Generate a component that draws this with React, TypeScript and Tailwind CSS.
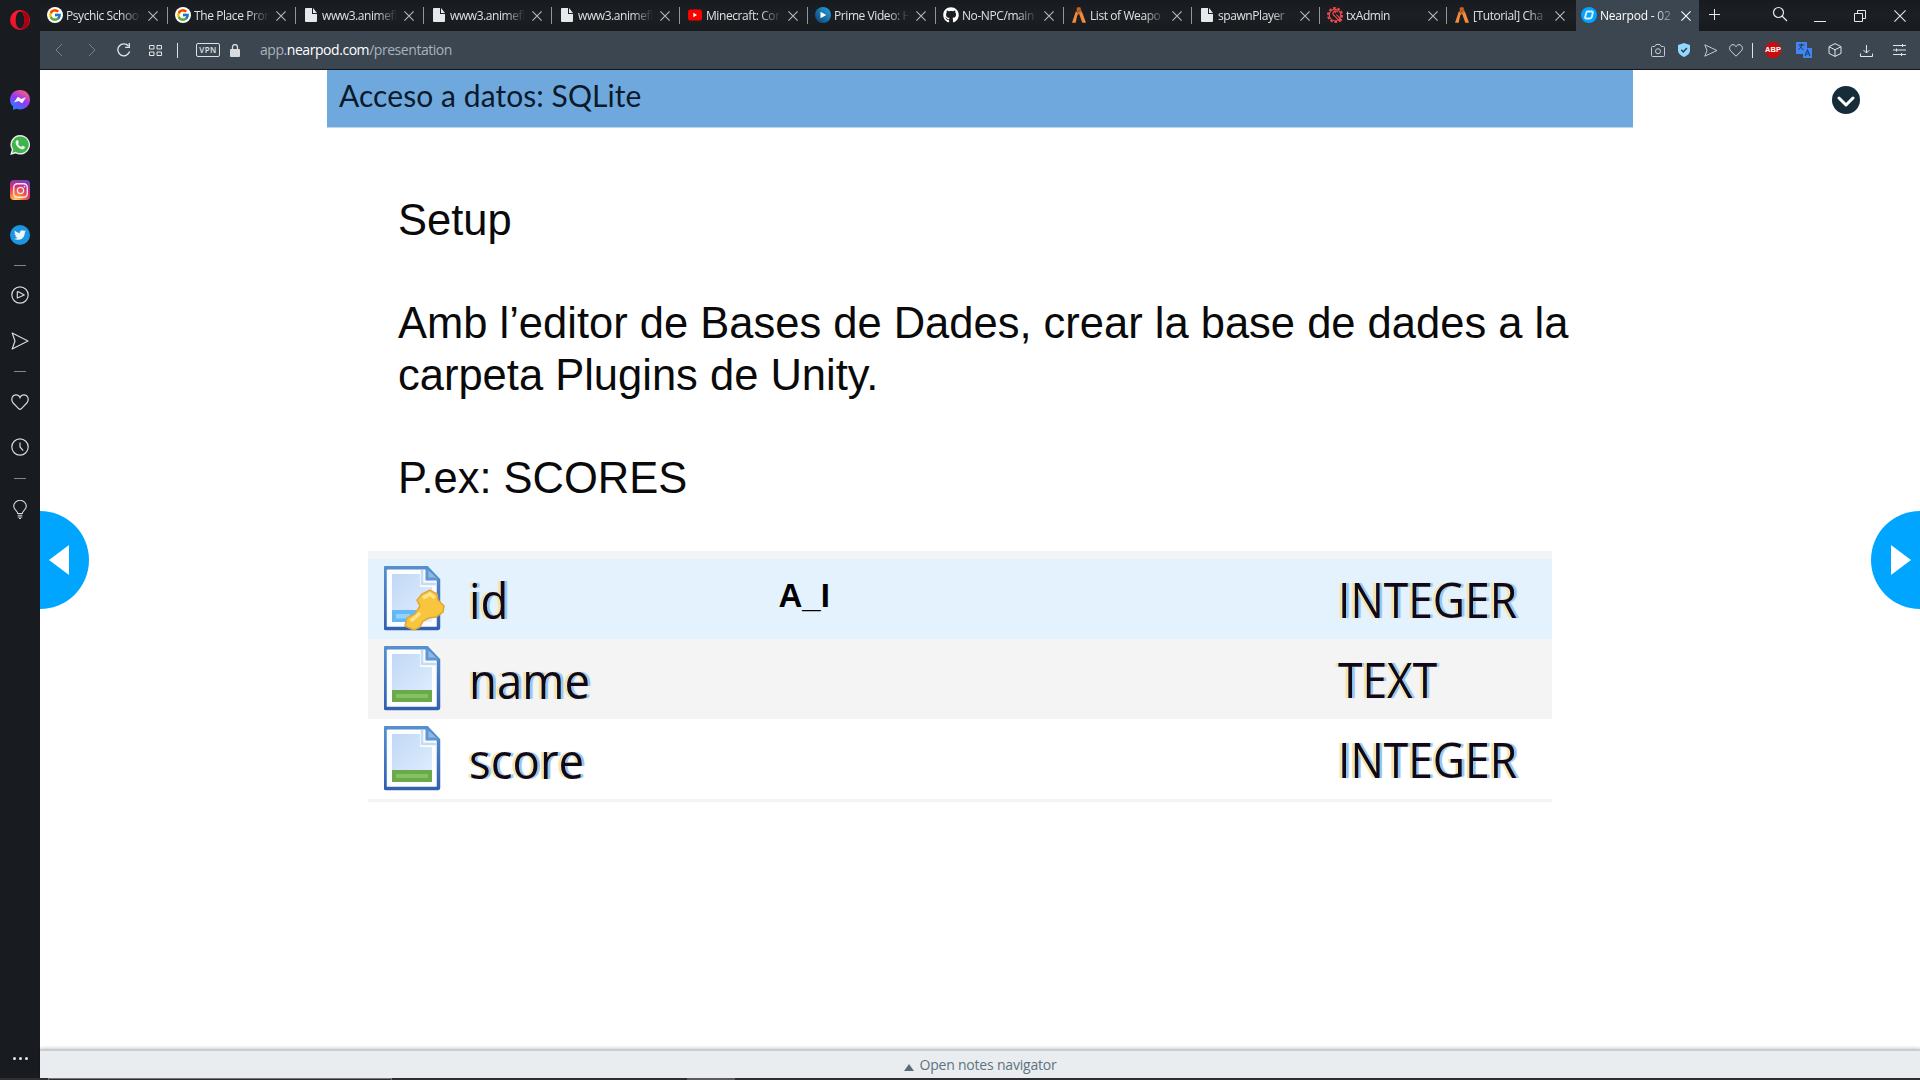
import React from "react";
import { FcGoogle } from "react-icons/fc";
import { FaGithub, FaTwitter, FaInstagram } from "react-icons/fa";

type Kind = "google" | "file" | "youtube" | "prime" | "github" | "fivem" | "tx" | "nearpod";

const TABS: { kind: Kind; title: string; width: string }[] = [
  { kind: "google", title: "Psychic Schoo", width: "w-[128px]" },
  { kind: "google", title: "The Place Pron", width: "w-[128px]" },
  { kind: "file", title: "www3.animefl", width: "w-[128px]" },
  { kind: "file", title: "www3.animefl", width: "w-[128px]" },
  { kind: "file", title: "www3.animefl", width: "w-[128px]" },
  { kind: "youtube", title: "Minecraft: Cor", width: "w-[128px]" },
  { kind: "prime", title: "Prime Video: H", width: "w-[128px]" },
  { kind: "github", title: "No-NPC/main", width: "w-[128px]" },
  { kind: "fivem", title: "List of Weapo", width: "w-[128px]" },
  { kind: "file", title: "spawnPlayer", width: "w-[128px]" },
  { kind: "tx", title: "txAdmin", width: "w-[127px]" },
  { kind: "fivem", title: "[Tutorial] Cha", width: "w-[129px]" },
];

function Favicon({ kind }: { kind: Kind }) {
  switch (kind) {
    case "google":
      return (
        <span className="flex size-4 items-center justify-center rounded-full bg-white">
          <FcGoogle size={14} />
        </span>
      );
    case "file":
      return (
        <svg width="16" height="16" viewBox="0 0 16 16">
          <path d="M3 1h6v6h5v7a1 1 0 0 1-1 1H3a1 1 0 0 1-1-1V2a1 1 0 0 1 1-1z" fill="#e6e9ec" />
          <path d="M10 1v5h4z" fill="#e6e9ec" />
        </svg>
      );
    case "youtube":
      return (
        <svg width="16" height="16" viewBox="0 0 16 16">
          <rect x="1" y="2.5" width="14" height="11" rx="2.5" fill="#f00" />
          <path d="M6.3 5.8v4.4L10 8z" fill="#fff" />
        </svg>
      );
    case "prime":
      return (
        <svg width="16" height="16" viewBox="0 0 16 16">
          <defs>
            <linearGradient id="prime" x1="0" y1="1" x2="1" y2="0">
              <stop offset="0" stopColor="#0b3f79" />
              <stop offset="1" stopColor="#27a5dc" />
            </linearGradient>
          </defs>
          <circle cx="8" cy="8" r="8" fill="url(#prime)" />
          <path d="M5.5 4.8v6.4L11.3 8z" fill="#fff" />
        </svg>
      );
    case "github":
      return <FaGithub size={16} color="#fff" />;
    case "fivem":
      return (
        <svg width="16" height="16" viewBox="0 0 16 16">
          <path d="M5.6 2 6.4.2h2.9L10 2 6.2 6z" fill="#c8641f" />
          <path d="M1 15.8 5 4l1.700 2-2 9.800z" fill="#f48a3a" />
          <path d="M6 6.800 10 2.600l.5 1.300-4.800 5z" fill="#e87c2e" />
          <path d="M8 6.500l2.800-2.200L15 15.800h-3.700z" fill="#f48a3a" />
        </svg>
      );
    case "tx":
      return (
        <svg width="16" height="16" viewBox="0 0 16 16" fill="none" stroke="#ee4a50">
          <circle cx="8" cy="8" r="7" strokeWidth="2" strokeDasharray="2.600 1.800" />
          <circle cx="8" cy="8" r="5.700" strokeWidth="1.100" />
          <path d="M10.800 5.200a2.600 2.600 0 1 0-3.200 3.700L13 14.500l1.700-1.600L9.400 7.600" strokeWidth="1.200" />
          <path d="M9.200 4.300 7.700 6" strokeWidth="1.200" />
        </svg>
      );
    default:
      return (
        <svg width="16" height="16" viewBox="0 0 16 16">
          <circle cx="8" cy="8" r="8" fill="#00a4ff" />
          <path d="M6.500 4.500h4.300q1.400 0 1 1.400l-1 4.200q-.4 1.400-1.800 1.400H5.200q-1.400 0-1-1.400l1-4.200q.3-1.400 1.300-1.400z" fill="none" stroke="#d9f1ff" strokeWidth="1.900" />
        </svg>
      );
  }
}

function Cross({ color = "#b4babf" }: { color?: string }) {
  return (
    <svg width="10" height="10" viewBox="0 0 10 10" stroke={color} strokeWidth="1.100" className="shrink-0">
      <path d="M.4.4l9.200 9.200M9.600.4.4 9.600" />
    </svg>
  );
}

function Tab({ kind, title, width, last }: { kind: Kind; title: string; width: string; last: boolean }) {
  return (
    <div className={`${width} flex h-[31px] shrink-0 items-center pl-[7px]`}>
      <span className="shrink-0 pb-px"><Favicon kind={kind} /></span>
      <span className="ml-[3px] w-[75px] shrink-0 whitespace-nowrap text-[12px] leading-[16px] tracking-[-0.420px] text-[#dfe1e3] [mask-image:linear-gradient(to_right,#000_72%,transparent_100%)]">
        {title}
      </span>
      <span className="ml-[6.500px] flex"><Cross /></span>
      {!last && <span className="ml-auto h-[17px] w-px bg-[#8d979f]" />}
    </div>
  );
}

function OperaLogo() {
  return (
    <svg width="20" height="20" viewBox="0 0 20 20">
      <defs>
        <linearGradient id="opera" x1="0" y1="0" x2="0" y2="1">
          <stop offset="0" stopColor="#ff1b2d" />
          <stop offset="1" stopColor="#e0142a" />
        </linearGradient>
      </defs>
      <path fillRule="evenodd" d="M10 0a10 10 0 1 0 0 20 10 10 0 0 0 0-20zm0 1.600c2.500 0 4.400 3.700 4.400 8.400s-1.900 8.400-4.400 8.400S5.700 14.700 5.700 10 7.500 1.600 10 1.600z" fill="url(#opera)" />
      <path d="M10 1.600C12.500 1.600 14.400 5.300 14.400 10S12.500 18.400 10 18.400c1 .8 4 .6 6.200-1.100A10 10 0 0 0 16.200 2.700C14 1 11 .8 10 1.600z" fill="#a70014" />
    </svg>
  );
}

function TabStrip() {
  return (
    <div className="flex h-[31px] shrink-0 items-start bg-gradient-to-b from-[#171a1f] via-[#1c2024] to-[#171a1d]">
      {TABS.map((t, i) => (
        <Tab key={i} {...t} last={i === TABS.length - 1} />
      ))}
      <div className="flex h-[31px] w-[123px] shrink-0 items-center bg-[#3b4651] pl-[5px]">
        <span className="pb-px"><Favicon kind="nearpod" /></span>
        <span className="ml-[3px] w-[74px] whitespace-nowrap text-[12px] leading-[16px] tracking-[-0.200px] text-white [mask-image:linear-gradient(to_right,#000_72%,transparent_105%)]">
          Nearpod - 02
        </span>
        <span className="ml-[6.500px] flex"><Cross color="#fff" /></span>
      </div>
      <svg className="mt-[9px] ml-[10px] shrink-0" width="11" height="11" viewBox="0 0 11 11" stroke="#e6e8ea">
        <path d="M5.500 0v11M0 5.500h11" />
      </svg>
      <div className="ml-auto flex h-[31px] items-center pr-[14px]">
        <svg width="16" height="16" viewBox="0 0 16 16" fill="none" stroke="#e6e8ea" strokeWidth="1.200" className="mb-1">
          <circle cx="6.500" cy="6.500" r="5" />
          <path d="M10 10l5 5" />
        </svg>
        <span className="mt-[11px] ml-[26px] h-px w-3 bg-[#e6e8ea]" />
        <svg width="12" height="12" viewBox="0 0 12 12" fill="none" stroke="#e6e8ea" className="ml-[28px]">
          <path d="M.5 3.500h8v8h-8zM3.500 3.500v-3h8v8h-3" />
        </svg>
        <svg width="12" height="12" viewBox="0 0 12 12" stroke="#e6e8ea" strokeWidth="1.100" className="ml-[28px]">
          <path d="M.4.4l11.200 11.200M11.600.4.4 11.600" />
        </svg>
      </div>
    </div>
  );
}

function AddressBar() {
  return (
    <div className="flex h-[39px] shrink-0 items-center border-b border-[#14171a] bg-[#3b4651]">
      <svg width="8" height="14" viewBox="0 0 8 14" fill="none" stroke="#76818a" className="ml-[15px]">
        <path d="M7 1 1 7l6 6" />
      </svg>
      <svg width="8" height="14" viewBox="0 0 8 14" fill="none" stroke="#76818a" className="ml-[25px]">
        <path d="M1 1l6 6-6 6" />
      </svg>
      <svg width="14" height="14" viewBox="0 0 14 14" fill="none" stroke="#e3e6e8" strokeWidth="1.300" className="ml-[21px]">
        <path d="M12.600 8.500A6 6 0 1 1 11.500 3" />
        <path d="M12.300 0v4.400H8.200" />
      </svg>
      <svg width="13" height="11" viewBox="0 0 13 11" fill="none" stroke="#e3e6e8" className="ml-[18px]">
        <path d="M.5.5h4.500v3.500H.5zM8 .5h4.500v3.500H8zM.5 7h4.500v3.500H.5zM8 7h4.500v3.500H8z" />
      </svg>
      <span className="ml-[15px] h-[15px] w-px bg-[#dfe2e4]" />
      <span className="ml-[18px] flex h-[14px] w-6 items-center justify-center rounded-[2px] border border-[#dfe2e4] text-[8px] leading-none font-semibold tracking-[0.500px] text-[#dfe2e4]">
        VPN
      </span>
      <svg width="10" height="13" viewBox="0 0 10 13" className="ml-[10px]">
        <rect y="5" width="10" height="8" rx="1" fill="#d9dcde" />
        <path d="M2.500 5.500V3a2.500 2.500 0 0 1 5 0v2.500" fill="none" stroke="#d9dcde" strokeWidth="1.300" />
      </svg>
      <span className="ml-[20px] text-[14px] leading-[18px] tracking-[-0.450px] whitespace-nowrap text-[#a9b3bb]">
        app.<span className="text-white">nearpod.com</span>/presentation
      </span>
      <div className="ml-auto flex items-center pr-[14px]">
        <svg width="14" height="13" viewBox="0 0 14 13" fill="none" stroke="#c5cacf">
          <path d="M1.500 2.500h2.200L5 .5h4l1.300 2h2.200q1 0 1 1v8q0 1-1 1h-11q-1 0-1-1v-8q0-1 1-1z" />
          <circle cx="7" cy="7.200" r="2.500" />
        </svg>
        <svg width="12" height="14" viewBox="0 0 12 14" className="ml-[13px]">
          <path d="M6 0l6 2v5.500c0 3-2.500 5-6 6.500-3.500-1.500-6-3.500-6-6.500V2z" fill="#90d8ff" />
          <path d="M3.300 6.800 5.300 8.900 8.900 5" fill="none" stroke="#2c3a45" strokeWidth="1.400" />
        </svg>
        <svg width="14" height="13" viewBox="0 0 14 13" fill="none" stroke="#c5cacf" className="ml-[14px]">
          <path d="M.8.8 13 6.500.8 12.200 3 6.500z" />
        </svg>
        <svg width="14" height="13" viewBox="0 0 14 13" fill="none" stroke="#d5d9dc" className="ml-[11px]">
          <path d="M7 12.200 1.500 6.800C-.6 4 1.200.7 4 .7c1.500 0 2.500.9 3 2 .5-1.100 1.500-2 3-2 2.800 0 4.600 3.300 2.500 6.100z" />
        </svg>
        <span className="ml-[9px] h-[15px] w-px bg-[#dfe2e4]" />
        <span className="ml-3 flex size-4 items-center justify-center bg-[#c70d0e] font-['Liberation_Sans'] text-[7.500px] font-bold text-white [clip-path:polygon(30%_0,70%_0,100%_30%,100%_70%,70%_100%,30%_100%,0_70%,0_30%)]">
          ABP
        </span>
        <svg width="16" height="16" viewBox="0 0 16 16" className="ml-[15px]">
          <rect width="11" height="12" fill="#4285f4" />
          <rect x="7" y="6" width="9" height="10" fill="#4285f4" />
          <path d="M2.500 3h6M5.500 1.500V3c0 2-1.500 3.500-3 4.500M4 4.500C5 6 6 7 7.500 7.500" stroke="#263646" fill="none" />
          <path d="M9 14l2.500-6 2.500 6M9.800 12h3.400" stroke="#26456f" fill="none" strokeWidth="1.200" />
        </svg>
        <svg width="14" height="14" viewBox="0 0 14 14" fill="none" stroke="#e3e6e8" className="ml-4">
          <path d="M7 .6l6 3v6.800l-6 3-6-3V3.600zM1 3.700l6 3.100 6-3.100M7 6.800v6.500" />
        </svg>
        <svg width="13" height="13" viewBox="0 0 13 13" fill="none" stroke="#e3e6e8" className="ml-[18px]">
          <path d="M6.500 1v8M3.500 6l3 3 3-3M.5 9.500v3h12v-3" />
        </svg>
        <svg width="13" height="12" viewBox="0 0 13 12" fill="none" stroke="#e3e6e8" className="ml-[20px]">
          <path d="M0 1.500h13M0 6h13M0 10.500h13M9.500 0v3M3.500 4.500v3M8.500 9v3" />
        </svg>
      </div>
    </div>
  );
}

function Dash({ className }: { className: string }) {
  return <span className={`${className} h-px w-3 shrink-0 bg-[#7d8a94]`} />;
}

function SideBar() {
  return (
    <div className="flex w-10 shrink-0 flex-col items-center bg-[#181b1f] pt-[10px]">
      <OperaLogo />
      <svg width="20" height="20" viewBox="0 0 20 20" className="mt-[60px]">
        <defs>
          <linearGradient id="msg" x1="0.200" y1="1" x2="0.800" y2="0">
            <stop offset="0" stopColor="#1688ff" />
            <stop offset=".5" stopColor="#9536f5" />
            <stop offset="1" stopColor="#ff6472" />
          </linearGradient>
        </defs>
        <path d="M10 0C4.300 0 0 4.200 0 9.700c0 2.900 1.200 5.200 3.100 6.900V20l3.300-1.200c1.100.4 2.300.6 3.600.6 5.700 0 10-4.200 10-9.700S15.700 0 10 0z" fill="url(#msg)" />
        <path d="M4 12.600 7.200 7.500q.7-1 1.700-.3l2.300 1.800L16 7.300l-3.200 5.100q-.7 1-1.700.3L8.800 10.900z" fill="#f2f2f5" />
      </svg>
      <svg width="20" height="20" viewBox="0 0 20 20" className="mt-[25px]">
        <path d="M10.200 0A9.700 9.700 0 0 0 1.800 14.600L.2 20l5.500-1.500A9.800 9.800 0 1 0 10.200 0z" fill="#e9ecea" />
        <path d="M10.200 1.500a8.200 8.200 0 0 0-6.800 12.900L2.400 17.700l3.400-1A8.300 8.300 0 1 0 10.200 1.500z" fill="#3db54a" />
        <path d="M6.800 5.300c.5-.4 1-.2 1.200.2l.8 1.800c.2.500-.8 1.300-.7 1.600.7 1.400 1.800 2.300 3.200 2.900.4.100 1-1.300 1.500-1.100l1.900 1c.6.400-.2 2.200-1.300 2.600-1.500.5-3.800-.6-5.300-2-1.400-1.300-2.500-3.200-2.500-4.700 0-1 .6-1.900 1.200-2.300z" fill="#f2f4f2" />
      </svg>
      <span className="mt-[25px] flex size-5 items-center justify-center rounded-[4px] bg-[radial-gradient(circle_at_28%_105%,#ffd85c_5%,#f9743a_30%,#d62f74_60%,#8b3ab0_82%,#4c53cf_100%)]">
        <FaInstagram size={17} color="#f3e9ee" />
      </span>
      <span className="mt-[25px] flex size-5 items-center justify-center rounded-full bg-[#1b95e0]">
        <FaTwitter size={12} color="#eef3f6" />
      </span>
      <Dash className="mt-5" />
      <svg width="18" height="18" viewBox="0 0 18 18" fill="none" stroke="#d5d9dc" strokeWidth="1.200" className="mt-[20px] -ml-px">
        <circle cx="9" cy="9" r="8.200" />
        <path d="M6.300 6v6l7-3-5-2.800q-2-1-2-.2z" strokeLinejoin="round" />
      </svg>
      <svg width="18" height="18" viewBox="0 0 18 18" fill="none" stroke="#d5d9dc" strokeWidth="1.200" className="mt-7 -ml-px">
        <path d="M1.200 1 17 9 1.200 17 4 9z" strokeLinejoin="round" />
      </svg>
      <Dash className="mt-[21px]" />
      <svg width="18" height="16" viewBox="0 0 18 16" fill="none" stroke="#d5d9dc" strokeWidth="1.200" className="mt-[22px] -ml-px">
        <path d="M7.800 14.800 2.200 9C-.6 5.600 1.300.8 5 .8c2 0 3.400 1.200 4 2.800C9.600 2 11 .8 13 .8c3.700 0 5.600 4.800 2.800 8.200l-5.600 5.800q-1.200 1-2.400 0z" />
      </svg>
      <svg width="18" height="18" viewBox="0 0 18 18" fill="none" stroke="#d5d9dc" strokeWidth="1.200" className="mt-[28px] -ml-px">
        <circle cx="9" cy="9" r="8.200" />
        <path d="M9 4.500V9l3.200 3.700" />
      </svg>
      <Dash className="mt-[22px]" />
      <svg width="14" height="19" viewBox="0 0 14 19" fill="none" stroke="#d5d9dc" strokeWidth="1.100" className="mt-[21px]">
        <path d="M4.700 13.500c0-2.500-4-4-4-7.200a6.300 6 0 0 1 12.600 0c0 3.200-4 4.700-4 7.200z" />
        <path d="M4.700 15.300h4.600M4.700 17h4.600M6 18.500h2" />
      </svg>
      <div className="mt-auto mb-[18px] flex gap-[3px]">
        <span className="size-[3px] rounded-full bg-[#e6e8ea]" />
        <span className="size-[3px] rounded-full bg-[#e6e8ea]" />
        <span className="size-[3px] rounded-full bg-[#e6e8ea]" />
      </div>
    </div>
  );
}

function FieldIcon({ primary = false }: { primary?: boolean }) {
  return (
    <svg width="62" height="66" viewBox="0 0 62 66" className="shrink-0">
      <defs>
        <linearGradient id="paper" x1="0" y1="0" x2="1" y2="1">
          <stop offset="0" stopColor="#c0d8f6" />
          <stop offset="1" stopColor="#e2effe" />
        </linearGradient>
        <linearGradient id="edge" x1="0" y1="0" x2="0" y2="1">
          <stop offset="0" stopColor="#5590cd" />
          <stop offset="1" stopColor="#335fb0" />
        </linearGradient>
      </defs>
      <path d="M2 1.800h41L54.500 14v47.500q0 1-1 1H2q-1 0-1-1v-58.500q0-1 1-1z" fill="#fbfdff" stroke="url(#edge)" strokeWidth="3.500" />
      <path d="M8 8h28v13h12v35H8z" fill="url(#paper)" />
      <path d="M38 4v14h14" fill="#f4f9ff" stroke="#c6dbf2" strokeWidth="2.500" />
      <path d="M43 3v10h11" fill="#8db7e6" stroke="#5f97d2" strokeWidth="3" />
      {primary ? (
        <>
          <path d="M8 44h26v12H8z" fill="#63b8f5" />
          <path d="M12 48h14v4.500H12z" fill="#93d2fb" />
          <path d="M21 60l2-8 8-4 5-8-3-6 5-6 8-4 7 4 1 6 6 6-1 6-7 5-7 1-6 3-3 6-6 3z" fill="#f8c63c" stroke="#e0a63a" strokeWidth="1.500" />
          <path d="M39 32l7-4 5 4M27 55l9-8" fill="none" stroke="#ffe48b" strokeWidth="3.500" />
        </>
      ) : (
        <>
          <path d="M8 44h40v12H8z" fill="#6ba84e" />
          <path d="M12 48h32v4H12z" fill="#83c35d" />
        </>
      )}
    </svg>
  );
}

function FieldRow({ name, type, bg, primary, note }: { name: string; type: string; bg: string; primary?: boolean; note?: string }) {
  return (
    <div className={`flex h-[80px] ${bg}`}>
      <div className="w-[62px] shrink-0 pt-[7px] pl-[16px]"><FieldIcon primary={primary} /></div>
      <div className="w-[313px] pt-[7px] pl-[39px]">
        <span className="inline-block origin-left scale-x-[0.930] text-[49px] leading-[68px] text-[#12081c] [text-shadow:-3px_0_1px_#f8e3a0,3px_0_1px_#8cc8f5]">
          {name}
        </span>
      </div>
      <div className="w-[595px] pt-[18px] pl-[36px] font-['Liberation_Sans'] text-[33px] leading-[38px] font-bold text-black">{note}</div>
      <div className="pt-[7px]">
        <span className="inline-block origin-left scale-x-[0.887] text-[50px] leading-[66px] whitespace-nowrap text-[#12081c] [text-shadow:-3px_0_1px_#f8e3a0,3px_0_1px_#8cc8f5]">
          {type}
        </span>
      </div>
    </div>
  );
}

function Slide() {
  return (
    <div className="relative min-h-0 flex-1 overflow-hidden bg-white">
      <div className="ml-[287px] w-[1306px]">
        <div className="h-[58px] border-b border-[#bdd5ed] bg-[#6fa8dc] pt-[5px] pl-[12px] font-['Lato'] text-[30px] leading-[40px] text-[#0b1a2b]">
          <span className="tracking-[0.070px] whitespace-nowrap">Acceso a datos: SQLite</span>
        </div>
        <div className="pt-[67px] pl-[71px] font-['Liberation_Sans'] text-[43.500px] leading-[51.600px] whitespace-nowrap text-[#0a0a0a]">
          <p>Setup</p>
          <p>&nbsp;</p>
          <p>Amb l’editor de Bases de Dades, crear la base de dades a la</p>
          <p>carpeta Plugins de Unity.</p>
          <p>&nbsp;</p>
          <p>P.ex: SCORES</p>
        </div>
        <div className="mt-[46px] ml-[40.500px] w-[1184px]">
          <div className="h-[8px] bg-[#f4f4f4]" />
          <FieldRow name="id" type="INTEGER" bg="bg-[#e4f2fd]" primary note="A_I" />
          <FieldRow name="name" type="TEXT" bg="bg-[#f4f4f4]" />
          <FieldRow name="score" type="INTEGER" bg="bg-white" />
          <div className="h-[3px] bg-[#f4f4f4]" />
        </div>
      </div>
      <div className="absolute top-[16px] right-[60px] flex size-7 items-center justify-center rounded-full bg-[#162c38]">
        <svg width="18" height="12" viewBox="0 0 18 12" fill="none" stroke="#fff" strokeWidth="3" strokeLinecap="round" strokeLinejoin="round" className="mt-[3px]">
          <path d="M2 2l7 7 7-7" />
        </svg>
      </div>
      <div className="absolute top-[441px] left-0 flex h-[98px] w-[49px] items-center rounded-r-full bg-[#00a5ff] pl-[9px]">
        <svg width="20" height="30" viewBox="0 0 20 30"><path d="M20 0v30L0 15z" fill="#fff" /></svg>
      </div>
      <div className="absolute top-[441px] right-0 flex h-[98px] w-[49px] items-center rounded-l-full bg-[#00a5ff] pl-[20px]">
        <svg width="20" height="30" viewBox="0 0 20 30"><path d="M0 0v30l20-15z" fill="#fff" /></svg>
      </div>
    </div>
  );
}

export default function App() {
  return (
    <div className="flex h-[1080px] w-[1920px] flex-col overflow-hidden bg-white font-['Open_Sans','Noto_Sans',sans-serif]">
      <div className="flex min-h-0 flex-1">
        <SideBar />
        <div className="flex min-w-0 flex-1 flex-col">
          <TabStrip />
          <AddressBar />
          <Slide />
          <div className="z-10 flex h-[29px] shrink-0 items-center justify-center gap-[5px] border-t-2 border-[#c9cdcf] pl-[1px] bg-[#e9edef] text-[14px] tracking-[-0.200px] text-[#60727f] shadow-[0_-1px_3px_rgba(0,0,0,0.200)]">
            <svg width="10" height="7" viewBox="0 0 10 7" className="mt-[5px]"><path d="M5 0l5 7H0z" fill="#5a6b79" /></svg>
            <span className="leading-[20px]">Open notes navigator</span>
          </div>
        </div>
      </div>
      <div className="flex h-[2px] shrink-0 bg-[#2e2f33]">
        <span className="ml-[48px] w-[344px] border-x border-t border-[#77797c]" />
        <span className="ml-[295px] w-[48px] bg-[#5c5d60]" />
      </div>
    </div>
  );
}
